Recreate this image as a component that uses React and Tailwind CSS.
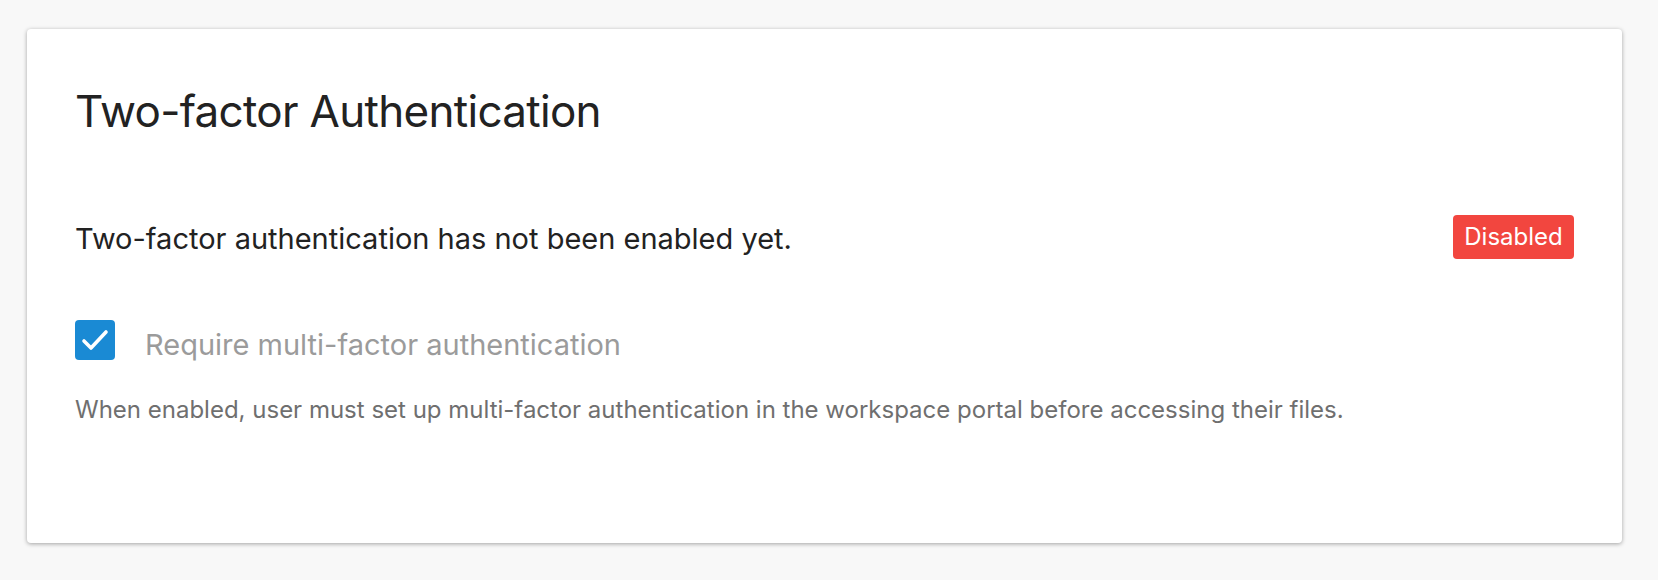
export default function App() {
  return (
    <div className="min-h-[580px] w-full bg-[#f8f8f8] pt-[29px] pl-[27px]" style={{ fontFamily: 'Inter, "Noto Sans", sans-serif' }}>
      <div className="w-[1595px] h-[514px] rounded-[4px] bg-white shadow-[0_1px_4px_rgba(0,0,0,0.35)] px-[48px] pt-[54px]">
        <h1 className="text-[44px] leading-[56px] font-normal text-[#222222] tracking-[-0.7px]">Two-factor Authentication</h1>
        <div className="mt-[76px] flex items-center justify-between">
          <p className="text-[29px] leading-[40px] text-[#222222] pt-[3px]">Two-factor authentication has not been enabled yet.</p>
          <span className="h-[44px] w-[121px] rounded-[4px] bg-[#f2463f] flex items-center justify-center text-[24px] text-white">Disabled</span>
        </div>
        <label className="mt-[56px] flex items-center gap-[30px]">
          <span className="w-[40px] h-[40px] rounded-[4px] bg-[#1a8ad4] flex items-center justify-center">
            <svg width="40" height="40" viewBox="0 0 40 40" fill="none" stroke="white" strokeWidth="3.6" strokeLinecap="round" strokeLinejoin="round">
              <path d="M9 21l7 7L31 12" />
            </svg>
          </span>
          <span className="text-[29px] leading-[40px] pt-[10px] text-[#9b9b9b]">Require multi-factor authentication</span>
        </label>
        <p className="mt-[29px] text-[24px] leading-[32px] text-[#6f6f6f]">When enabled, user must set up multi-factor authentication in the workspace portal before accessing their files.</p>
      </div>
    </div>
  );
}
